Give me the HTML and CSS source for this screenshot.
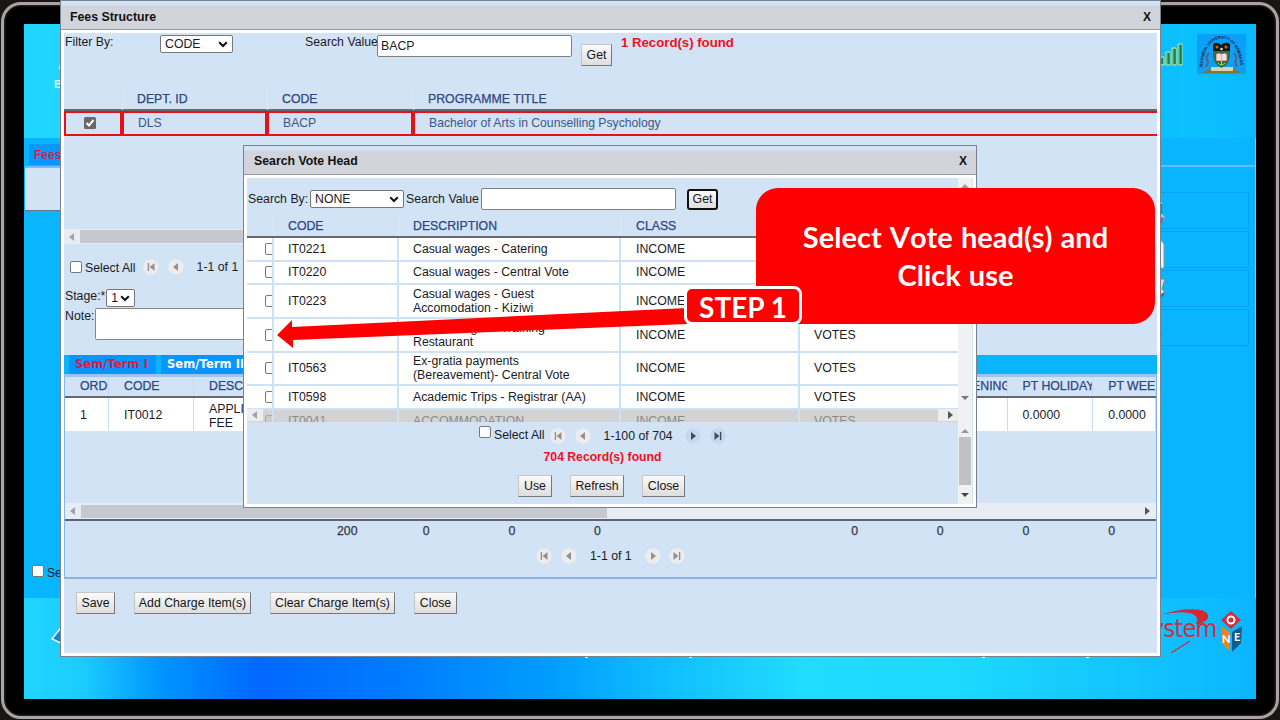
FILE: index.html
```html
<!DOCTYPE html>
<html lang="en">
<head>
<meta charset="utf-8">
<title>Fees Structure</title>
<link rel="stylesheet" href="styles.css">
</head>
<body>
<svg class="defs" width="0" height="0">
  <symbol id="first" viewBox="0 0 16 16"><circle cx="8" cy="8" r="7.7" fill="#ededed"/><path d="M4.7 4h1.4v8H4.7zM11.5 4v8L6.6 8z"/></symbol>
  <symbol id="prev" viewBox="0 0 16 16"><circle cx="8" cy="8" r="7.7" fill="#ededed"/><path d="M10 4v8L5 8z"/></symbol>
  <symbol id="next" viewBox="0 0 16 16"><circle cx="8" cy="8" r="7.7" fill="var(--disc,#ededed)"/><path d="M6 4v8l5-4z"/></symbol>
  <symbol id="last" viewBox="0 0 16 16"><circle cx="8" cy="8" r="7.7" fill="var(--disc,#ededed)"/><path d="M4.5 4v8l4.900-4zM9.900 4h1.400v8H9.900z"/></symbol>
  <symbol id="chev" viewBox="0 0 10 7"><path d="M1.2 1.2L5 5l3.800-3.800" fill="none" stroke="#111" stroke-width="2"/></symbol>
</svg>
<div class="frame"></div>
<div class="screen">
  <div class="band top"></div>
  <div class="band middle"></div>
  <div class="band bottom"></div>
  <span class="bit bit-a">A</span><span class="bit bit-b">B</span>
  <div class="side-tab">Fees</div>
  <div class="side-panel"></div>
  <div class="side-select"><i class="check"></i>Se</div>
  <svg class="corner-card" viewBox="0 0 14 22"><path d="M1 15L12 1v19z" fill="#1b83d3" stroke="#eaf6ff" stroke-width="1.500"/></svg>
  <div class="side-cards">
    <div class="side-card"></div><div class="side-card"></div><div class="side-card"></div><div class="side-card"></div>
  </div>
  <svg class="side-art" viewBox="0 0 10 160">
    <path d="M0 14h2v12l3 3-2 5H0z" fill="#b9c7da"/><path d="M0 16h2v10H0z" fill="#b33f70"/><path d="M0 30l4-1-1 5-3 3z" fill="#667a90"/>
    <path d="M0 51l4 5v24H0z" fill="#f4f4f2" stroke="#8996a4"/>
    <path d="M0 91h5l-3 10 3 3-5 6z" fill="#d8dde0" stroke="#76838e"/><path d="M0 107l4-3v3l-4 4z" fill="#715e6c"/>
    <path d="M0 145l2 2-2 3z" fill="#2a80b0"/>
  </svg>
  <svg class="bars" viewBox="0 0 24 24">
    <g fill="#46a45a" stroke="#c9f5c0" stroke-width=".8"><path d="M1 15h3v8H1zM6 10h4v13H6zM12 6h4v17h-4zM18 2h4v21h-4z"/></g>
    <path d="M2 16v6M9 11v11M15 7v15M21 3v19" stroke="#127036" stroke-width="1.300"/>
  </svg>
  <svg class="crest" viewBox="0 0 49 40">
    <rect width="49" height="40" fill="#0a9ff8"/>
    <path id="arc" d="M5.500 34A19 29.500 0 0 1 43.500 34" fill="none"/>
    <text class="crest-text"><textPath href="#arc" textLength="74" lengthAdjust="spacingAndGlyphs">TECHNICAL UNIVERSITY OF MOMBASA</textPath></text>
    <path d="M5 39Q24 26 45 39z" fill="#797b3c"/><path d="M14 33h22v4H14z" fill="#d8d5b2"/>
    <path d="M12 19q-4 4-1 9l-2 5M37 19q4 4 1 9l2 5" fill="none" stroke="#625e75" stroke-width="2"/>
    <path d="M16 17h17q1 13-8.500 17Q15 30 16 17z" fill="#277343"/><path d="M19 20q3-2 5.500 0 3-2 5.500 0v7H19z" fill="#f4dfdf" stroke="#b93b44" stroke-width=".7"/>
    <path d="M24.500 20v11M21 29q3 4 7 0" stroke="#d6c53b" fill="none"/>
    <path d="M16 10q4-3 8 1 4-4 9-1v7H16z" fill="#181810"/><circle cx="20" cy="13" r="1.500" fill="#b96b35"/><circle cx="24.500" cy="15" r="1.300" fill="#ddd"/><circle cx="29" cy="13" r="1.500" fill="#b96b35"/>
  </svg>
  <div class="brand">ystem</div>
  <svg class="brand-art" viewBox="0 0 84 50">
    <path d="M3 8Q25 0 43 3q10 3 6 10l-7 4H38q4-9-7-11Q19 4 3 8z" fill="#d6282f"/>
    <path d="M13 46l19-12-11 7z" fill="#d6282f" stroke="#d6282f"/>
    <path d="M73 4l10 9-10 9-10-9z" fill="#d52e37"/><circle cx="73" cy="13" r="3.500" fill="none" stroke="#fff" stroke-width="2"/>
    <path d="M63 19l9 6v20l-8-9z" fill="#ec831d"/><path d="M84 19l-10 6v20l9-9z" fill="#105a8c"/>
    <text x="64" y="36" class="cube">N</text><text x="76" y="34" class="cube">E</text>
  </svg>
  <div class="ticks"><i></i><i></i><i></i><i></i></div>
</div>

<section class="window main">
  <header class="title"><span>Fees Structure</span><b>X</b></header>
  <div class="content">
    <div class="filter">
      <label class="w-filter">Filter By:</label>
      <span class="select w-code">CODE<svg><use href="#chev"/></svg></span>
      <label class="w-value">Search Value</label>
      <span class="input w-bacp">BACP</span>
      <span class="btn get-main">Get</span>
      <strong class="found">1 Record(s) found</strong>
    </div>
    <div class="grid3 head3"><span></span><span>DEPT. ID</span><span>CODE</span><span>PROGRAMME TITLE</span></div>
    <div class="grid3 picked"><span><svg viewBox="0 0 12 12"><rect width="12" height="12" rx="1.500" fill="#686868"/><path d="M2.500 6l2.500 2.500L9.500 3" fill="none" stroke="#fff" stroke-width="2"/></svg></span><span>DLS</span><span>BACP</span><span>Bachelor of Arts in Counselling Psychology</span></div>
    <div class="space"></div>
    <div class="hscroll upper"><i class="tri left"></i><i class="thumb"></i></div>
    <div class="pager pager-main"><i class="check"></i><span class="all">Select All</span><svg><use href="#first"/></svg><svg><use href="#prev"/></svg><span class="range">1-1 of 1</span></div>
    <div class="stage"><label>Stage:*</label><span class="select one">1<svg><use href="#chev"/></svg></span></div>
    <div class="note"><label>Note:</label><span class="area"></span></div>
    <nav class="tabs"><span class="active">Sem/Term I</span><span>Sem/Term II</span></nav>
    <div class="terms">
      <div class="grid-term term-head"><span>ORD</span><span>CODE</span><span>DESCRIPTION</span><span></span><span></span><span></span><span></span><span></span><span></span><span></span><span>PT EVENING</span><span>PT HOLIDAY</span><span>PT WEE</span></div>
      <div class="grid-term term-row"><span>1</span><span>IT0012</span><span>APPLICATION FEE</span><span></span><span></span><span></span><span></span><span></span><span></span><span></span><span></span><span>0.0000</span><span>0.0000</span></div>
      <div class="term-space"></div>
      <div class="hscroll lower"><i class="tri left"></i><i class="thumb"></i><i class="tri right"></i></div>
      <div class="totals"><span>200</span><span>0</span><span>0</span><span>0</span><span></span><span></span><span>0</span><span>0</span><span>0</span><span>0</span></div>
      <div class="pager pager-terms"><svg><use href="#first"/></svg><svg><use href="#prev"/></svg><span class="range">1-1 of 1</span><svg><use href="#next"/></svg><svg><use href="#last"/></svg></div>
    </div>
    <div class="actions"><span class="btn b-save">Save</span><span class="btn b-add">Add Charge Item(s)</span><span class="btn b-clear">Clear Charge Item(s)</span><span class="btn b-close">Close</span></div>
  </div>
</section>

<section class="window lookup">
  <header class="title"><span>Search Vote Head</span><b>X</b></header>
  <div class="content split">
    <div class="body">
      <div class="search"><label class="l-by">Search By:</label><span class="select w-none">NONE<svg><use href="#chev"/></svg></span><label class="l-value">Search Value</label><span class="input w-blank"></span><span class="btn focus">Get</span></div>
      <div class="vrow vhead"><span></span><span>CODE</span><span>DESCRIPTION</span><span>CLASS</span><span></span></div>
      <div class="vrow r23"><span><i class="check"></i></span><span>IT0221</span><span>Casual wages - Catering</span><span>INCOME</span><span></span></div>
      <div class="vrow r23"><span><i class="check"></i></span><span>IT0220</span><span>Casual wages - Central Vote</span><span>INCOME</span><span></span></div>
      <div class="vrow r34"><span><i class="check"></i></span><span>IT0223</span><span>Casual wages - Guest<br>Accomodation - Kiziwi</span><span>INCOME</span><span></span></div>
      <div class="vrow r34"><span><i class="check"></i></span><span></span><span>Casual wages - Training<br>Restaurant</span><span>INCOME</span><span>VOTES</span></div>
      <div class="vrow r34"><span><i class="check"></i></span><span>IT0563</span><span>Ex-gratia payments<br>(Bereavement)- Central Vote</span><span>INCOME</span><span>VOTES</span></div>
      <div class="vrow r23"><span><i class="check"></i></span><span>IT0598</span><span>Academic Trips - Registrar (AA)</span><span>INCOME</span><span>VOTES</span></div>
      <div class="cut"><div class="vrow r23 faded"><span><i class="check"></i></span><span>IT0041</span><span>ACCOMMODATION</span><span>INCOME</span><span>VOTES</span></div></div>
      <div class="pager pager-look"><i class="check"></i><span class="all">Select All</span><svg><use href="#first"/></svg><svg><use href="#prev"/></svg><span class="range">1-100 of 704</span><svg class="on"><use href="#next"/></svg><svg class="on"><use href="#last"/></svg></div>
      <strong class="count">704 Record(s) found</strong>
      <div class="look-actions"><span class="btn b-use">Use</span><span class="btn b-refresh">Refresh</span><span class="btn b-shut">Close</span></div>
    </div>
    <div class="vscrolls"><div class="vs vs-a"><i class="tri up"></i><i class="tri down"></i></div><div class="vs vs-b"><i class="tri up"></i><i class="vthumb"></i><i class="tri down dark"></i></div></div>
  </div>
  <div class="rail rail-left"><i class="tri left"></i></div><div class="rail rail-right"><i class="tri right"></i></div>
</section>

<div class="callout">Select Vote head(s) and<br>Click use</div>
<svg class="arrow" viewBox="0 0 415 36"><path d="M0 27L15 12v7L410 0v16L16 32v8z" fill="#f00"/></svg>
<div class="step">STEP 1</div>
</body>
</html>
```
FILE: styles.css
```css
* { box-sizing: border-box; }
body { margin: 0; width: 1280px; height: 720px; position: relative; overflow: hidden; background: #191716; font: 12.3px/14px "Liberation Sans", Arial, sans-serif; color: #1b1b26; }
span, label, strong { white-space: nowrap; }
.defs { position: absolute; }
.frame { position: absolute; left: 1px; top: 2px; width: 1278px; height: 717px; border: 3px solid #aaa3a2; border-radius: 20px; background: #000; box-shadow: inset 0 0 3px #555; }
.screen { position: absolute; left: 24px; top: 24px; width: 1232px; height: 675px; overflow: hidden; }
.band.top { height: 114px; background: linear-gradient(90deg, #20d5ff 3%, #05a8ff 20%, #087dff 55%, #0cc1ff 94%, #0bb8ff); }
.band.middle { height: 460px; background: #0ab5ff; border-right: 1px solid #7ccbff; }
.band.bottom { height: 101px; background: linear-gradient(90deg, #20d4ff, #1bcbff 5%, #0096ff 11%, #0068ff 19%, #007dff 31%, #009eff 43%, #0fbbff 51%, #20dcff 63%, #1cd9ff 76%, #0bb5ff); }
.bit { position: absolute; color: #e2f8ff; font-weight: bold; }
.bit-a { left: 34px; top: 34px; }
.bit-b { left: 30px; top: 53px; font-size: 11px; }
.side-tab { position: absolute; left: 5px; top: 120px; width: 40px; height: 21px; background: #0798ff; color: #e0183c; font-weight: bold; padding: 4px 5px; font-size: 12px; }
.side-panel { position: absolute; left: 1px; top: 142px; width: 37px; height: 45px; background: #d1e3f5; border-bottom: 1px solid #657785; border-top: 2px solid #6fbcff; }
.side-select { position: absolute; left: 8px; top: 541px; display: flex; gap: 3px; line-height: 17px; font-size: 12px; }
.corner-card { position: absolute; left: 27px; top: 600px; width: 14px; height: 22px; }
.side-cards { position: absolute; left: 1120px; top: 141px; width: 111px; height: 433px; border-top: 2px solid #65bdff; padding: 25px 6px 0 0; display: flex; flex-direction: column; gap: 2px; }
.side-card { height: 37px; border: 1px solid #08a2f3; }
.side-art { position: absolute; left: 1136px; top: 164px; width: 10px; height: 160px; }
.bars { position: absolute; left: 1136px; top: 18px; width: 24px; height: 24px; }
.crest { position: absolute; left: 1173px; top: 10px; width: 49px; height: 40px; }
.crest-text { font: bold 4px "Liberation Sans", sans-serif; fill: #12202c; }
.brand { position: absolute; left: 1127px; top: 590px; color: #d0303f; font: 25px/30px "DejaVu Sans Condensed", "DejaVu Sans", sans-serif; letter-spacing: -.8px; }
.brand-art { position: absolute; left: 1134px; top: 583px; width: 84px; height: 50px; }
.cube { font: bold 11px Lato, sans-serif; fill: #fff; }
.ticks { position: absolute; left: 561px; top: 632px; width: 504px; display: flex; justify-content: space-between; }
.ticks i { width: 3px; height: 2px; background: #e8f8ff; }
.ticks i:nth-child(2) { margin: 0 190px 0 0; }

.window { position: absolute; border: 1px solid #7a838b; background: #fff; }
.main { left: 60px; top: 0; width: 1101px; height: 657px; }
.lookup { left: 243px; top: 145px; width: 734px; height: 363px; }
.title { height: 30px; padding: 6px 9px 0; background: linear-gradient(#d0e3f7 4px, #d2d4dc 5px); border-bottom: 1px solid #9899a1; display: flex; justify-content: space-between; font-weight: bold; line-height: 20px; color: #111; }
.main .title { height: 29px; }
.lookup .title { height: 29px; padding-left: 10px; padding-top: 5px; }
.title b { font-size: 12px; }
.content { background: #d1e3f5; margin: 3px 3px 0; height: 620px; }
.filter { height: 55px; display: flex; align-items: flex-start; padding: 1px 0 0 1px; }
.filter label { padding-top: 1px; }
.w-filter { width: 95px; }
.select { background: #fff; border: 1px solid #777; border-radius: 2px; height: 18px; padding: 1px 4px; display: flex; justify-content: space-between; align-items: center; line-height: 15px; }
.select svg { width: 10px; height: 7px; }
.w-code { width: 73px; margin-right: 72px; margin-top: 1px; }
.w-value { width: 72px; }
.input { height: 22px; background: #fff; border: 1px solid #808080; border-radius: 2px; padding: 3px; }
.w-bacp { width: 195px; margin-top: 1px; }
.btn { display: block; height: 22px; border: 1px solid; border-color: #c6c6c6 #777 #777 #c6c6c6; background: linear-gradient(#fafafa, #dedede); text-align: center; line-height: 20px; color: #151515; }
.get-main { width: 31px; margin: 10px 9px 0 9px; }
.found, .count { color: #f01020; }
.found { padding-top: 2px; font-size: 13.200px; }
.grid3 { display: grid; grid-template-columns: 58px 145px 146px 1fr; }
.grid3 span { padding-left: 15px; }
.head3 { height: 23px; color: #2c467f; border-bottom: 2px solid #686a70; line-height: 22px; -webkit-text-stroke: .25px #2c467f; }
.head3 span + span { border-left: 1px solid #dce6f0; padding-left: 14px; }
.picked { height: 25px; color: #3d5689; line-height: 21px; }
.picked span { border: 2px solid #e81018; font-size: 12.2px; padding-left: 14px; }
.picked span:first-child { padding: 4px 0 0 18px; }
.picked span:last-child { border-right: 0; }
.picked svg { display: block; width: 12px; height: 12px; }
.space { height: 93px; }
.hscroll { height: 15px; background: #e8edf4; display: flex; align-items: center; }
.hscroll .thumb { height: 13px; background: #c5c9cf; }
.tri { display: block; width: 0; height: 0; border: 4px solid transparent; }
.left { border-right: 5px solid #a0a4aa; border-left: 0; }
.right { border-left: 5px solid #555; border-right: 0; }
.up { border-bottom: 4px solid #a0a0a0; border-top: 0; }
.down { border-top: 4px solid #777; border-bottom: 0; }
.dark { border-top-color: #444; }
.upper .left { margin: 0 6px 0 5px; }
.upper .thumb { width: 700px; }
.pager { display: flex; align-items: center; }
.pager svg { width: 16px; height: 16px; fill: #929292; }
.pager svg.on { fill: #43495c; --disc: #c8d6ee; }
.check { display: block; flex: none; width: 12px; height: 12px; background: #fff; border: 1px solid #777; border-radius: 2px; }
.pager-main { height: 45px; padding: 0 0 0 6px; }
.all { margin: 3px 7px 0 3px; }
.pager-main svg { margin-right: 9px; }
.pager-main .range { margin-left: 4px; }
.stage { height: 19px; display: flex; padding-left: 1px; }
.stage .one { width: 29px; margin-left: 1px; }
.note { height: 47px; display: flex; padding-left: 1px; }
.note label { padding-top: 1px; width: 30px; }
.area { width: 700px; height: 32px; border: 1px solid #888; border-radius: 2px; background: #fff; }
.tabs { height: 19px; background: #0ab5ff; display: flex; gap: 5px; padding-left: 5px; color: #fff; font: bold 11.5px/18px "DejaVu Sans", Verdana, sans-serif; }
.tabs span { background: #0795ff; padding: 0 6px; width: 87px; letter-spacing: .08px; }
.tabs span + span { width: 100px; }
.tabs .active { color: #d41f48; }
.terms { height: 205px; border: 1px solid #85b6e8; border-top: 3px solid #9dc3ee; border-bottom-width: 2px; }
.grid-term { display: grid; grid-template-columns: 44px 85px 128px repeat(9, 85.7px) 1fr; overflow: hidden; }
.grid-term span { padding-left: 15px; border-right: 1px solid #c6dbf0; overflow: hidden; }
.term-head { height: 21px; border-bottom: 2px solid #65686f; line-height: 19px; color: #2c467f; -webkit-text-stroke: .25px #2c467f; }
.term-row { height: 34px; background: #fff; align-items: stretch; border-bottom: 1px solid #d6e5f4; }
.term-row span { line-height: 35px; }
.term-row span:nth-child(3) { white-space: normal; line-height: 14px; padding-top: 4px; padding-right: 20px; }
.term-space { height: 71px; }
.lower { height: 16px; }
.lower .left { margin: 0 6px 0 5px; }
.lower .thumb { width: 526px; }
.lower .right { margin-left: auto; margin-right: 6px; }
.totals { height: 24px; border-top: 2px solid #5c6570; padding-left: 272px; display: grid; grid-template-columns: repeat(10, 85.7px); line-height: 20px; color: #34383f; overflow: hidden; -webkit-text-stroke: .25px #34383f; }
.pager-terms { height: 26px; padding-left: 471px; gap: 9px; }
.pager-terms .range { margin: 0 4px; }
.pager-terms svg:last-child { margin-left: -1px; }
.actions { display: flex; padding: 13px 0 0 12px; }
.b-save { width: 39px; }
.b-add { width: 117px; margin-left: 19px; }
.b-clear { width: 125px; margin-left: 19px; }
.b-close { width: 43px; margin-left: 19px; }

.split { height: 326px; display: flex; }
.body { width: 711px; display: flex; flex-direction: column; }
.search { height: 38px; flex: none; display: flex; align-items: center; padding: 4px 0 0 1px; }
.l-by { width: 62px; }
.w-none { width: 94px; }
.l-value { padding-left: 2px; width: 77px; }
.w-blank { width: 195px; }
.focus { width: 31px; margin-left: 11px; border: 2px solid #111; border-radius: 3px; line-height: 17px; height: 21px; }
.vrow { flex: none; display: grid; grid-template-columns: 27px 125px 222px 179px 1fr; background: #fff; border-bottom: 2px solid #cfe1f5; }
.vrow > span { display: flex; align-items: center; padding-left: 14px; border-right: 2px solid #cfe1f5; overflow: hidden; }
.vrow > span:first-child { padding-left: 18px; }
.vrow > span:last-child { border-right: 0; }
.vrow > span:nth-child(4) { padding-left: 15px; }
.vhead { height: 22px; background: none; border-bottom: 2px solid #65686f; color: #2c467f; -webkit-text-stroke: .25px #2c467f; }
.vhead > span { border-right: 1px solid #dce6f0; }
.r23 { height: 23.500px; }
.r34 { height: 33.800px; }
.cut { height: 12px; flex: none; overflow: hidden; }
.faded { background: #d3d3d3; color: #8b8b8b; border-color: #c8c8c8; }
.faded .check { background: #ccc; border-color: #aaa; }
.pager-look { height: 26px; flex: none; padding-left: 232px; }
.pager-look .check { margin-bottom: 5px; }
.pager-look .all { margin: 0 5px 0 3px; }
.pager-look svg { margin-right: 9px; margin-top: 3px; }
.pager-look .range { margin: 3px 12px 0 4px; }
.count { align-self: center; margin: 1px 0 10px; line-height: 16px; font-size: 12.2px; }
.look-actions { display: flex; padding-left: 271px; }
.b-use { width: 34px; }
.b-refresh { width: 54px; margin-left: 18px; }
.b-shut { width: 43px; margin-left: 18px; }
.vscrolls { width: 14px; display: flex; flex-direction: column; }
.vs { background: #f1f1f1; display: flex; flex-direction: column; align-items: center; padding: 6px 0 5px; }
.vs-a { height: 230px; flex: none; justify-content: space-between; }
.vs-a .down { margin-bottom: 3px; }
.vs-b { flex: 1; padding-top: 21px; }
.vs-b .up { border-bottom-color: #999; }
.vthumb { width: 12px; height: 48px; margin: 4px 0 8px; background: #c1c1c1; }
.rail { position: absolute; top: 263px; height: 12px; background: #eee; padding-top: 2px; }
.rail-left { left: 3px; width: 16px; padding-left: 5px; }
.rail-right { left: 694px; width: 20px; padding-left: 10px; }

.callout { position: absolute; left: 756px; top: 188px; width: 399px; height: 136px; border-radius: 22px; background: #f00; color: #fff; text-align: center; padding-top: 30px; font: bold 29px/38px Lato, sans-serif; font-kerning: none; word-spacing: 1px; }
.arrow { position: absolute; left: 277px; top: 308px; width: 415px; height: 36px; overflow: visible; }
.step { position: absolute; left: 684px; top: 286px; width: 118px; height: 39px; border: 3px solid #fff; border-radius: 8px; background: #f00; color: #fff; text-align: center; font: bold 28px/36px Lato, sans-serif; }
```
